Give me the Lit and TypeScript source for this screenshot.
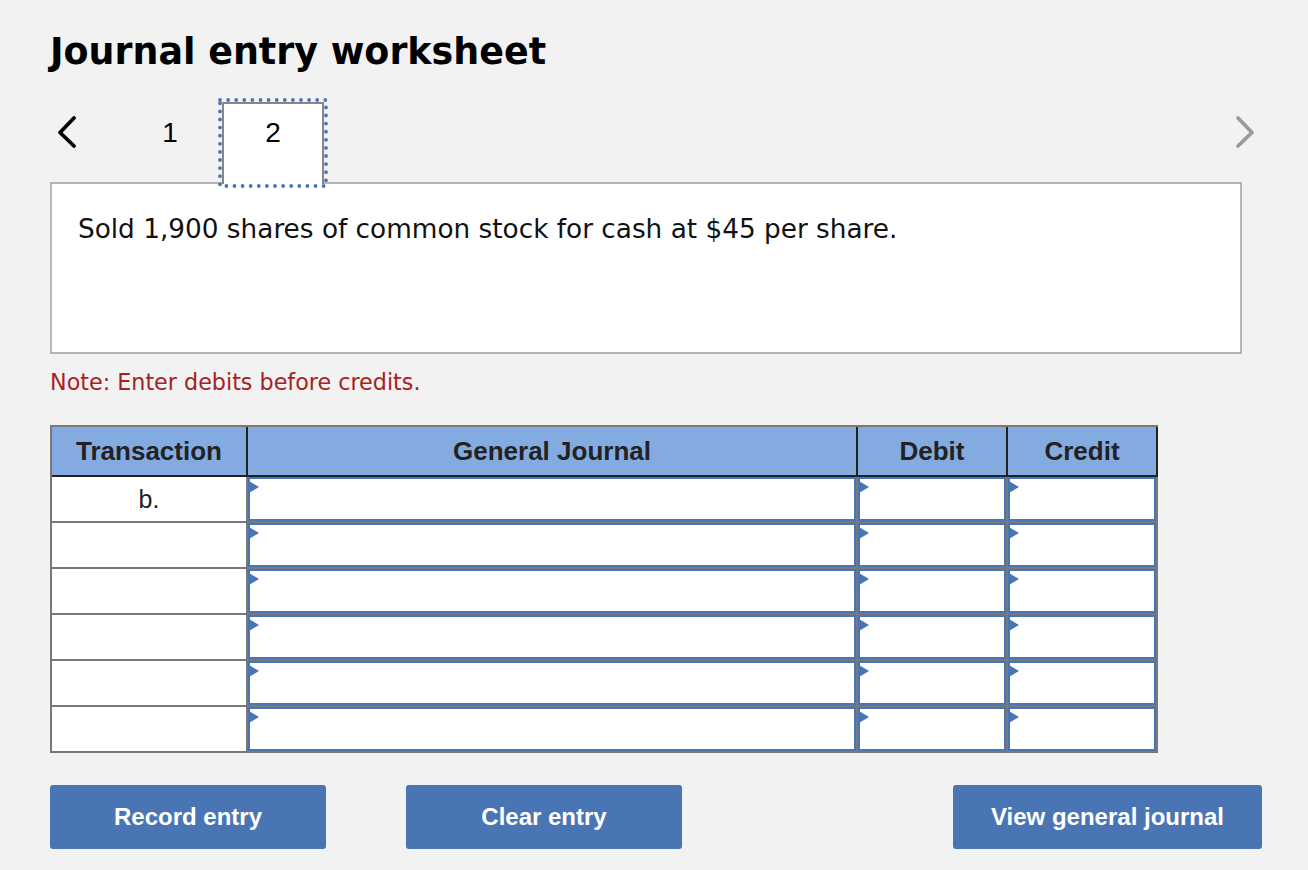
import { LitElement, html, css, svg } from "lit";
import { customElement } from "lit/decorators.js";

const rows = ["b.", "", "", "", "", ""];

@customElement("app-root")
export class AppRoot extends LitElement {
  static styles = css`
    :host {
      display: block;
      width: 1308px;
      height: 870px;
      box-sizing: border-box;
      background: #f2f2f2;
      padding: 29px 46px 0 50px;
      font-family: "Liberation Sans", Arial, sans-serif;
      color: #1f1f1f;
      overflow: hidden;
    }
    h1 {
      margin: 0;
      font: bold 36.45px/46px "DejaVu Sans", Verdana, sans-serif;
      color: #000;
      height: 44px;
    }
    nav {
      display: flex;
      align-items: flex-start;
      margin-top: 29px;
      height: 82px;
      margin-bottom: -2px;
      position: relative;
    }
    .chev { display: block; flex: none; margin-top: 13px; }
    .chev.prev { margin-left: 6px; }
    .chev.next { margin-left: auto; margin-right: 6px; }
    .tab {
      flex: none;
      box-sizing: border-box;
      font-size: 28px;
      line-height: 58px;
      text-align: center;
      color: #000;
    }
    .tab.one { width: 100px; margin-left: 40px; padding-top: 2px; }
    .tab.two {
      width: 102px;
      height: 82px;
      margin-left: 2px;
      background: #fff;
      border: 2px solid #868686;
      border-bottom: 0;
      position: relative;
      z-index: 1;
    }
    .dots { position: absolute; left: -7px; top: -7px; overflow: visible; }
    .box {
      box-sizing: border-box;
      width: 1192px;
      height: 172px;
      background: #fff;
      border: 2px solid #b5b5b5;
      padding: 26px 26px 0;
      font: 26.32px/38px "DejaVu Sans", Verdana, sans-serif;
      color: #111;
    }
    .note {
      margin: 14px 0 0;
      font: 22.25px/28px "DejaVu Sans", Verdana, sans-serif;
      color: #a52222;
    }
    .table {
      margin-top: 29px;
      width: 1108px;
      box-sizing: border-box;
      display: grid;
      grid-template-columns: 196px 610px 150px 150px;
      grid-template-rows: 50px repeat(6, 46px);
      border-top: 2px solid #787878;
      border-left: 2px solid #787878;
    }
    .th {
      box-sizing: border-box;
      background: #84abe0;
      border-right: 2px solid #222;
      border-bottom: 2px solid #222;
      font-weight: bold;
      font-size: 26px;
      line-height: 49px;
      text-align: center;
      color: #222;
    }
    .tx {
      box-sizing: border-box;
      background: #fff;
      border-right: 2px solid #787878;
      border-bottom: 2px solid #787878;
      font-size: 25px;
      line-height: 44px;
      text-align: center;
    }
    .in {
      box-sizing: border-box;
      background: #fff;
      border-right: 2px solid #787878;
      border-bottom: 2px solid #787878;
      display: flex;
    }
    .field {
      flex: 1;
      background: #fff;
      border: 2px solid #4a75b5;
      position: relative;
    }
    .field::before {
      content: "";
      position: absolute;
      left: -1px;
      top: 2px;
      border-left: 10px solid #4a75b5;
      border-top: 6px solid transparent;
      border-bottom: 6px solid transparent;
    }
    .actions {
      display: flex;
      margin-top: 32px;
    }
    button {
      height: 64px;
      border: 0;
      border-radius: 3px;
      background: #4a75b4;
      color: #fff;
      font: bold 24px "Liberation Sans", Arial, sans-serif;
      padding: 0;
    }
    .b1 { width: 276px; }
    .b2 { width: 276px; margin-left: 80px; }
    .b3 { width: 309px; margin-left: auto; }
  `;

  render() {
    return html`
      <h1>Journal entry worksheet</h1>
      <nav>
        <svg class="chev prev" width="24" height="36" viewBox="0 0 24 36">
          <polyline points="18,3 4,17.5 18,31" fill="none" stroke="#000" stroke-width="3.8" stroke-linecap="round" stroke-linejoin="round"></polyline>
        </svg>
        <div class="tab one">1</div>
        <div class="tab two">2
          <svg class="dots" width="112" height="92" viewBox="0 0 112 92">
            ${svg`<rect x="3" y="3" width="106" height="86" fill="none" stroke="#4a75b5" stroke-width="3.8" stroke-linecap="round" stroke-dasharray="0 8.1"></rect>`}
          </svg>
        </div>
        <svg class="chev next" width="24" height="36" viewBox="0 0 24 36">
          <polyline points="6,3 20,17.5 6,31" fill="none" stroke="#9a9a9a" stroke-width="3.8" stroke-linecap="round" stroke-linejoin="round"></polyline>
        </svg>
      </nav>
      <div class="box">Sold 1,900 shares of common stock for cash at $45 per share.</div>
      <p class="note">Note: Enter debits before credits.</p>
      <div class="table">
        <div class="th">Transaction</div>
        <div class="th">General Journal</div>
        <div class="th">Debit</div>
        <div class="th">Credit</div>
        ${rows.map(
          (r) => html`
            <div class="tx">${r}</div>
            <div class="in"><div class="field"></div></div>
            <div class="in"><div class="field"></div></div>
            <div class="in"><div class="field"></div></div>
          `
        )}
      </div>
      <div class="actions">
        <button class="b1">Record entry</button>
        <button class="b2">Clear entry</button>
        <button class="b3">View general journal</button>
      </div>
    `;
  }
}
